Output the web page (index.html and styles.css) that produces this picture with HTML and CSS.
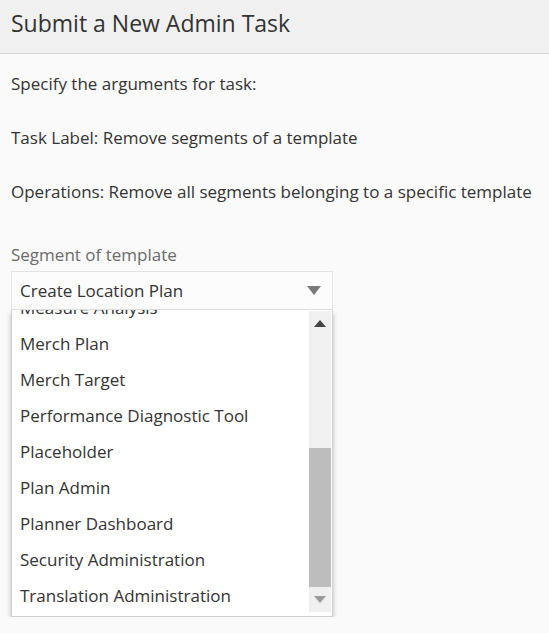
FILE: index.html
```html
<!DOCTYPE html>
<html>
<head>
<meta charset="utf-8">
<link rel="stylesheet" href="styles.css">
</head>
<body>
<header class="header"><h1 class="title">Submit a New Admin Task</h1></header>
<main class="content">
  <p class="line">Specify the arguments for task:</p>
  <p class="line">Task Label: Remove segments of a template</p>
  <p class="line">Operations: Remove all segments belonging to a specific template</p>
  <div class="field">
    <label class="field-label">Segment of template</label>
    <div class="select">
      <span class="select-value">Create Location Plan</span>
      <span class="select-caret"></span>
    </div>
    <div class="dropdown">
      <ul class="options">
        <li class="option">Measure Analysis</li>
        <li class="option">Merch Plan</li>
        <li class="option">Merch Target</li>
        <li class="option">Performance Diagnostic Tool</li>
        <li class="option">Placeholder</li>
        <li class="option">Plan Admin</li>
        <li class="option">Planner Dashboard</li>
        <li class="option">Security Administration</li>
        <li class="option">Translation Administration</li>
      </ul>
      <div class="scrollbar">
        <span class="arrow arrow-up"></span>
        <div class="track"><div class="thumb"></div></div>
        <span class="arrow arrow-down"></span>
      </div>
    </div>
  </div>
</main>
</body>
</html>
```
FILE: styles.css
```css
html, body {
  margin: 0;
  padding: 0;
  background: #fafafa;
  font-family: "Open Sans", "Noto Sans", sans-serif;
  color: #333;
}
.header {
  height: 53px;
  background: #f0f0f0;
  border-bottom: 1px solid #d4d4d4;
  display: flex;
  align-items: center;
  padding: 0 11px;
}
.title {
  margin: 0;
  font-weight: 400;
  font-size: 23px;
  color: #333;
  position: relative;
  top: -4px;
}
.content {
  padding: 17px 11px 0;
}
.line {
  margin: 0 0 28px;
  font-size: 17px;
  line-height: 26px;
}
.field {
  margin-top: 37px;
  width: 322px;
}
.field-label {
  display: block;
  font-size: 17px;
  line-height: 26px;
  color: #6b6b6b;
  margin-bottom: 3px;
}
.select {
  height: 37px;
  border: 1px solid #e3e3e3;
  background: #fcfcfc;
  display: flex;
  align-items: center;
  justify-content: space-between;
  padding: 0 11px 0 8px;
  font-size: 17px;
}
.select-caret {
  width: 0;
  height: 0;
  border-left: 7px solid transparent;
  border-right: 7px solid transparent;
  border-top: 9px solid #7a7a7a;
}
.dropdown {
  height: 307px;
  border: 1px solid #d0d0d0;
  border-top: none;
  background: #fff;
  box-shadow: 0 3px 5px rgba(0,0,0,0.25);
  display: flex;
  box-sizing: border-box;
}
.options {
  list-style: none;
  margin: 0;
  padding: 0 0 2px;
  flex: 1;
  display: flex;
  flex-direction: column;
  justify-content: flex-end;
  overflow: hidden;
}
.option {
  flex: none;
  height: 36px;
  line-height: 36px;
  padding-left: 8px;
  font-size: 17px;
  color: #333;
  white-space: nowrap;
}
.scrollbar {
  width: 22px;
  margin: 1px 1px 4px 0;
  background: #f0f0f0;
  display: flex;
  flex-direction: column;
  align-items: center;
}
.arrow {
  width: 0;
  height: 0;
  border-left: 6px solid transparent;
  border-right: 6px solid transparent;
  margin: 9px 0;
}
.arrow-up { border-bottom: 7px solid #444; }
.arrow-down { border-top: 7px solid #999; }
.track {
  flex: 1;
  width: 100%;
  display: flex;
  flex-direction: column;
  justify-content: flex-end;
}
.thumb {
  height: 139px;
  background: #bdbdbd;
}
```
